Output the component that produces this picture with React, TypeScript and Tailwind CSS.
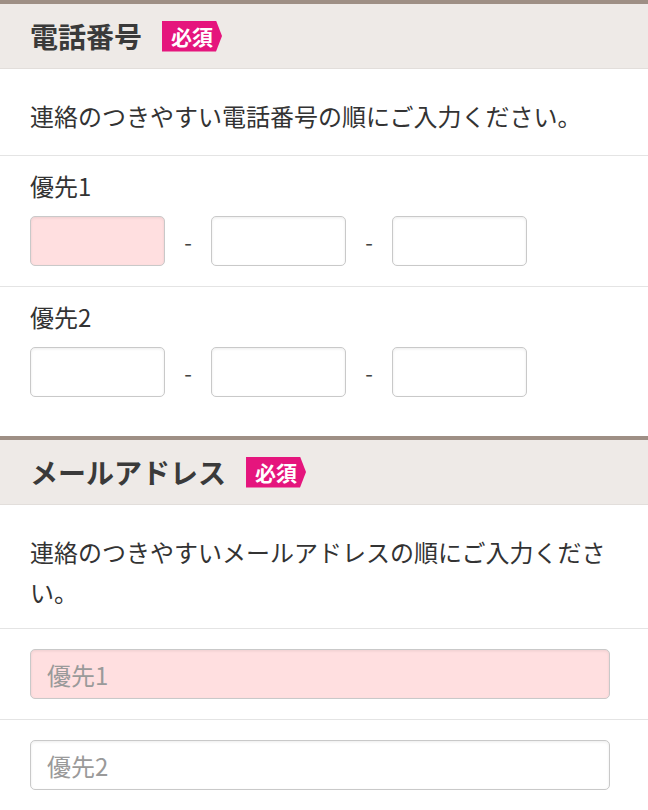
import React from "react";

function RequiredBadge() {
  return (
    <span className="ml-5 inline-flex h-[31px] items-center bg-[#e5157d] pl-[9px] pr-[9px] text-[21px] font-bold leading-none text-white [clip-path:polygon(0_0,calc(100%-6px)_0,100%_50%,calc(100%-6px)_100%,0_100%)]">
      必須
    </span>
  );
}

function SectionHeader({ title }: { title: string }) {
  return (
    <div className="flex h-[69px] items-center border-t-4 border-b border-t-[#9e8f85] border-b-[#e2dedb] bg-[#eeeae7] px-[30px]">
      <h2 className="text-[28px] font-bold leading-none text-[#3a3a3a]">{title}</h2>
      <RequiredBadge />
    </div>
  );
}

function TextBox({
  pink,
  placeholder,
  className,
}: {
  pink?: boolean;
  placeholder?: string;
  className?: string;
}) {
  return (
    <input
      type="text"
      placeholder={placeholder}
      className={
        "h-[50px] rounded-[5px] border border-[#c9c9c9] px-4 text-[24px] text-[#333] shadow-[inset_0_1px_3px_rgba(0,0,0,0.08)] outline-none placeholder:text-[#9a9a9a] " +
        (pink ? "bg-[#ffdfe0] " : "bg-white ") +
        (className ?? "")
      }
    />
  );
}

function PhoneRow({ label, pink, last }: { label: string; pink?: boolean; last?: boolean }) {
  return (
    <div className={"px-[30px] pt-[10px] pb-5 " + (last ? "" : "border-b border-[#e4e4e4]")}>
      <p className="text-[24px] leading-[40px]">{label}</p>
      <div className="mt-[10px] flex items-center">
        <TextBox pink={pink} className="w-[135px]" />
        <span className="w-[46px] text-center text-[22px] text-[#444]">-</span>
        <TextBox className="w-[135px]" />
        <span className="w-[46px] text-center text-[22px] text-[#444]">-</span>
        <TextBox className="w-[135px]" />
      </div>
    </div>
  );
}

export default function App() {
  return (
    <div className="min-h-screen bg-white font-['Noto_Sans_CJK_JP','Noto_Sans',sans-serif] text-[#333]">
      <section>
        <SectionHeader title="電話番号" />
        <p className="border-b border-[#e4e4e4] px-[30px] pt-[27px] pb-[19px] text-[24px] leading-[40px]">
          連絡のつきやすい電話番号の順にご入力ください。
        </p>
        <PhoneRow label="優先1" pink />
        <PhoneRow label="優先2" last />
      </section>

      <section className="mt-[19px]">
        <SectionHeader title="メールアドレス" />
        <p className="border-b border-[#e4e4e4] px-[30px] pt-[27px] pb-[16px] text-[24px] leading-[40px]">
          連絡のつきやすいメールアドレスの順にご入力ください。
        </p>
        <div className="border-b border-[#e4e4e4] px-[30px] py-5">
          <TextBox pink placeholder="優先1" className="w-[580px]" />
        </div>
        <div className="px-[30px] py-5">
          <TextBox placeholder="優先2" className="w-[580px]" />
        </div>
      </section>
    </div>
  );
}
